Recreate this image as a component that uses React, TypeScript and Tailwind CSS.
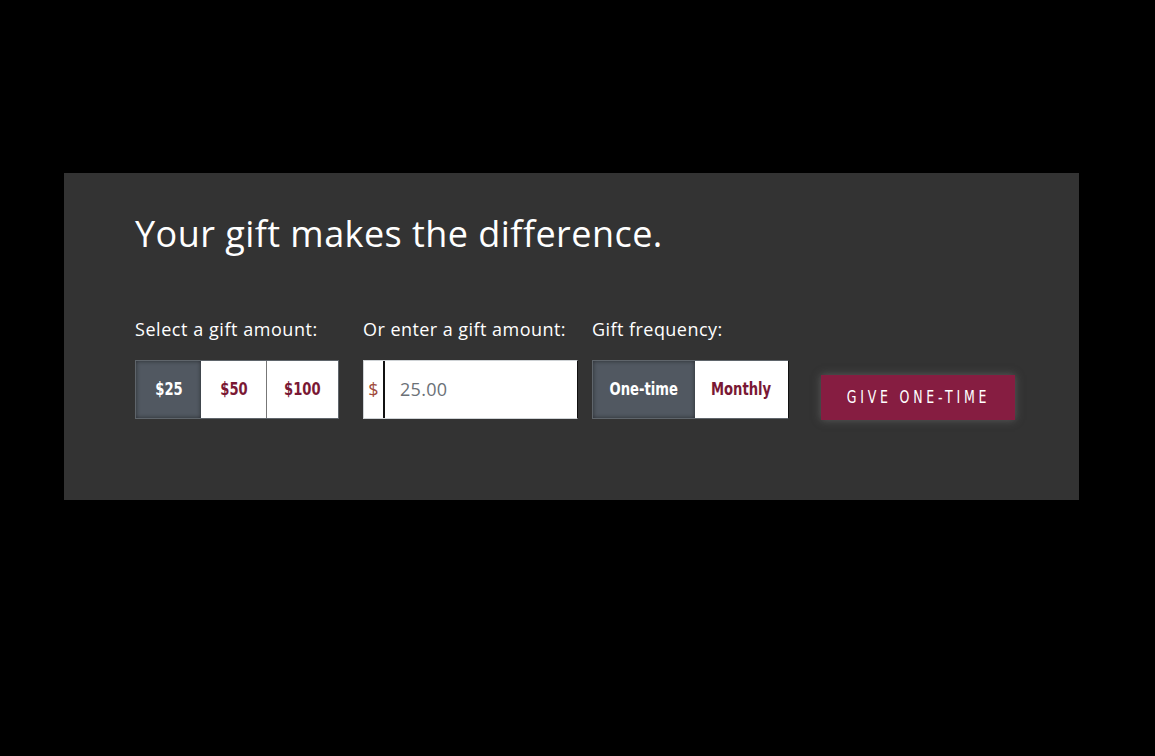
import React from "react";

const cond = { fontFamily: '"DejaVu Sans Condensed", "DejaVu Sans", sans-serif', fontStretch: "condensed" as const };

function C({ children, className = "" }: { children: React.ReactNode; className?: string }) {
  return (
    <span className={"inline-block scale-x-[0.86] font-bold text-[17px] " + className} style={cond}>
      {children}
    </span>
  );
}

export default function App() {
  return (
    <div className="min-h-[756px] w-full bg-black pt-[173px]">
      <div className="ml-[64px] w-[1015px] h-[327px] bg-[#333333] pl-[71px] pt-[36px]" style={{ fontFamily: '"Open Sans", "Noto Sans", sans-serif' }}>
        <h1 className="text-[36px] leading-[50px] text-white tracking-[0.45px]">Your gift makes the difference.</h1>
        <div className="mt-[60px] flex items-end">
          <div className="w-[204px]">
            <div className="text-[18px] leading-[20px] text-white mb-[21px] tracking-[0.55px]">Select a gift amount:</div>
            <div className="flex h-[59px] border border-[#5f656b]">
              <div className="w-[65px] flex items-center justify-center bg-[#515861] shadow-[inset_0_0_4px_rgba(0,0,0,0.5)] text-white"><C>$25</C></div>
              <div className="w-[66px] flex items-center justify-center bg-white border-r border-[#777] text-[#7a1834]"><C>$50</C></div>
              <div className="flex-1 flex items-center justify-center bg-white text-[#7a1834]"><C>$100</C></div>
            </div>
          </div>
          <div className="w-[215px] ml-[24px]">
            <div className="text-[18px] leading-[20px] text-white mb-[21px] tracking-[0.45px]">Or enter a gift amount:</div>
            <div className="flex h-[59px] bg-white border border-[#cfd3d6] border-r-[#111]">
              <div className="w-[21px] flex items-center justify-center text-[#a04a3c] text-[18px] border-r-2 border-[#111]">$</div>
              <div className="flex-1 flex items-center pl-[15px] text-[#6b7177] text-[18px] tracking-[0.3px]">25.00</div>
            </div>
          </div>
          <div className="w-[197px] ml-[14px]">
            <div className="text-[18px] leading-[20px] text-white mb-[21px] tracking-[0.45px]">Gift frequency:</div>
            <div className="flex h-[59px] border border-[#5f656b] border-r-[#111]">
              <div className="w-[102px] flex items-center justify-center bg-[#515861] shadow-[inset_0_0_4px_rgba(0,0,0,0.5)] text-white"><C>One-time</C></div>
              <div className="flex-1 flex items-center justify-center bg-white text-[#7a1834]"><C>Monthly</C></div>
            </div>
          </div>
          <div className="ml-[32px] mb-[-1px]">
            <button className="w-[194px] h-[45px] bg-[#861d41] text-white shadow-[0_0_8px_rgba(120,120,120,0.6)] flex items-center justify-center">
              <span className="inline-block scale-x-[0.82] text-[17px] tracking-[4.6px]" style={cond}>GIVE ONE-TIME</span>
            </button>
          </div>
        </div>
      </div>
    </div>
  );
}
